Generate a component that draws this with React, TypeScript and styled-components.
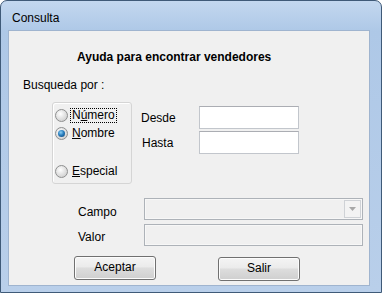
import styled, { createGlobalStyle } from 'styled-components'

const GlobalStyle = createGlobalStyle`
  html, body {
    margin: 0;
    padding: 0;
    background: #ffffff;
  }
  body {
    font-family: 'Liberation Sans', Arial, sans-serif;
    font-size: 12px;
    color: #000;
  }
`

const radios = [
  { key: 'numero', label: <>N<u>ú</u>mero</>, checked: false, focused: true, offset: 0 },
  { key: 'nombre', label: <><u>N</u>ombre</>, checked: true, focused: false, offset: 3 },
  { key: 'especial', label: <><u>E</u>special</>, checked: false, focused: false, offset: 23 },
]

export default function App() {
  return (
    <>
      <GlobalStyle />
      <Window>
        <TitleBar>Consulta</TitleBar>
        <Client>
          <Heading>Ayuda para encontrar vendedores</Heading>
          <SectionLabel>Busqueda por :</SectionLabel>

          <MiddleRow>
            <GroupBox>
              {radios.map((r) => (
                <RadioRow key={r.key} offset={r.offset}>
                  <RadioCircle checked={r.checked} />
                  <RadioLabel focused={r.focused}>{r.label}</RadioLabel>
                </RadioRow>
              ))}
            </GroupBox>

            <RangeFields>
              <FieldLabel>Desde</FieldLabel>
              <TextBox />
              <FieldLabel indent={1}>Hasta</FieldLabel>
              <TextBox />
            </RangeFields>
          </MiddleRow>

          <FilterFields>
            <FieldLabel drop={3}>Campo</FieldLabel>
            <Combo>
              <ComboButton>
                <svg width="7" height="4" viewBox="0 0 7 4">
                  <path d="M0 0 L7 0 L3.5 4 Z" fill="#a8a8a8" />
                </svg>
              </ComboButton>
            </Combo>
            <FieldLabel drop={2}>Valor</FieldLabel>
            <DisabledBox />
          </FilterFields>

          <ButtonRow>
            <PushButton>Aceptar</PushButton>
            <PushButton lower>Salir</PushButton>
          </ButtonRow>
        </Client>
      </Window>
    </>
  )
}

const Window = styled.div`
  width: 382px;
  height: 293px;
  box-sizing: border-box;
  border: 1px solid #3f5a78;
  border-radius: 7px 7px 0 0;
  background: linear-gradient(to bottom, #c3d7ef 0px, #aec8e7 30px, #b9cfea 100%);
  padding: 0 11px 6px 7px;
  display: flex;
  flex-direction: column;
`

const TitleBar = styled.div`
  height: 29px;
  box-sizing: border-box;
  display: flex;
  align-items: center;
  padding: 4px 0 0 4px;
  font-size: 12px;
  color: #000;
`

const Client = styled.div`
  flex: 1;
  box-sizing: border-box;
  background: #f0f0f0;
  border: 1px solid #9fb4cf;
  display: flex;
  flex-direction: column;
  align-items: flex-start;
`

const Heading = styled.div`
  margin: 19px 0 0 68px;
  font-weight: bold;
  font-size: 12px;
  line-height: 15px;
`

const SectionLabel = styled.div`
  margin: 13px 0 0 14px;
  line-height: 15px;
`

const MiddleRow = styled.div`
  margin: 9px 0 0 43px;
  display: flex;
  gap: 9px;
`

const GroupBox = styled.div`
  width: 80px;
  height: 82px;
  box-sizing: border-box;
  border: 1px solid #d5d5d5;
  border-radius: 3px;
  box-shadow: inset 1px 1px 0 #ffffff;
  padding: 5px 0 0 2px;
  display: flex;
  flex-direction: column;
`

interface RadioRowProps {
  offset: number
}

const RadioRow = styled.div<RadioRowProps>`
  height: 15px;
  margin-top: ${({ offset }) => offset}px;
  display: flex;
  align-items: center;
  gap: 2px;
`

interface RadioCircleProps {
  checked: boolean
}

const RadioCircle = styled.span<RadioCircleProps>`
  position: relative;
  width: 13px;
  height: 13px;
  box-sizing: border-box;
  border-radius: 50%;
  border: 1px solid #8e8f8f;
  background: radial-gradient(circle at 40% 35%, #ffffff 0%, #e4e4e4 45%, #c6c6c6 100%);
  flex-shrink: 0;

  &::after {
    content: '';
    display: ${({ checked }) => (checked ? 'block' : 'none')};
    position: absolute;
    left: 2px;
    top: 2px;
    width: 7px;
    height: 7px;
    border-radius: 50%;
    background: radial-gradient(circle at 40% 35%, #8fd0f4 0%, #2a7fbf 45%, #0e3d6b 100%);
  }
`

interface RadioLabelProps {
  focused: boolean
}

const RadioLabel = styled.span<RadioLabelProps>`
  line-height: 13px;
  padding: 0 1px;
  border: 1px dotted ${({ focused }) => (focused ? '#000' : 'transparent')};
  white-space: nowrap;
`

const RangeFields = styled.div`
  padding-top: 4px;
  display: grid;
  grid-template-columns: 58px 100px;
  grid-auto-rows: 23px;
  row-gap: 2px;
  align-items: center;
  align-content: start;
`

interface FieldLabelProps {
  indent?: number
  drop?: number
}

const FieldLabel = styled.span<FieldLabelProps>`
  padding-left: ${({ indent }) => indent ?? 0}px;
  padding-top: ${({ drop }) => (drop ?? 0) * 2}px;
`

const TextBox = styled.div`
  height: 23px;
  box-sizing: border-box;
  background: #ffffff;
  border: 1px solid #c2c6cc;
  border-top-color: #abadb3;
`

const FilterFields = styled.div`
  margin: 14px 0 0 69px;
  display: grid;
  grid-template-columns: 66px 219px;
  grid-auto-rows: 22px;
  row-gap: 4px;
  align-items: center;
`

const Combo = styled.div`
  height: 22px;
  box-sizing: border-box;
  background: #f0f0f0;
  border: 1px solid #adb2b8;
  box-shadow: inset 0 0 0 1px #f7f7f7;
  display: flex;
  justify-content: flex-end;
  align-items: stretch;
  padding: 1px;
`

const ComboButton = styled.div`
  width: 17px;
  box-sizing: border-box;
  border: 1px solid #cfd2d6;
  background: #f3f3f3;
  display: flex;
  align-items: center;
  justify-content: center;
`

const DisabledBox = styled.div`
  height: 22px;
  box-sizing: border-box;
  background: #f0f0f0;
  border: 1px solid #adb2b8;
  box-shadow: inset 0 0 0 1px #f7f7f7;
`

const ButtonRow = styled.div`
  margin: 10px 0 0 65px;
  display: flex;
  align-items: flex-start;
  gap: 62px;
`

interface PushButtonProps {
  lower?: boolean
}

const PushButton = styled.button<PushButtonProps>`
  width: 82px;
  height: 24px;
  margin: ${({ lower }) => (lower ? '1px' : '0')} 0 0 0;
  padding: 0 0 2px 0;
  box-sizing: border-box;
  border: 1px solid #707070;
  border-radius: 3px;
  background: linear-gradient(to bottom, #f4f4f4 0%, #ebebeb 45%, #dddddd 50%, #cfcfcf 100%);
  box-shadow: inset 0 0 0 1px #fcfcfc;
  font-family: 'Liberation Sans', Arial, sans-serif;
  font-size: 12px;
  color: #000;
`
